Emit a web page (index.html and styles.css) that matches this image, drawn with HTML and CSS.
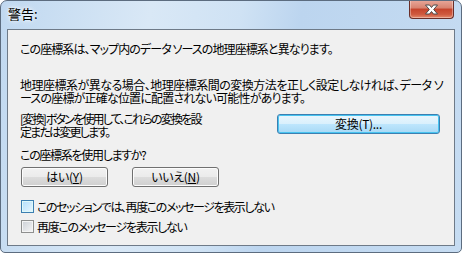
FILE: index.html
```html
<!DOCTYPE html>
<html lang="ja">
<head>
<meta charset="utf-8">
<link rel="stylesheet" href="styles.css">
</head>
<body>
<div class="window">
  <div class="titlebar">
    <span class="title">警告:</span>
    <div class="close">
      <svg width="17" height="11" viewBox="0 0 17 11">
        <path d="M2.5 1 L6.5 1 L8.5 3.5 L10.5 1 L14.5 1 L10.7 5.5 L14.5 10 L10.5 10 L8.5 7.5 L6.5 10 L2.5 10 L6.3 5.5 Z" fill="#fff" stroke="#4a4a4a" stroke-width="1" stroke-linejoin="round"/>
      </svg>
    </div>
  </div>
  <div class="client">
    <p class="line ls-09">この座標系は、マップ内のデータ&nbsp;ソースの地理座標系と異なります。</p>
    <p class="line para2"><span class="ln ls-05">地理座標系が異なる場合、地理座標系間の変換方法を正しく設定しなければ、データ&nbsp;ソ</span><span class="ln ls-08">ースの座標が正確な位置に配置されない可能性があります。</span></p>
    <div class="row">
      <p class="line ls-18"><span class="ln">[変換] ボタンを使用して、これらの変換を設</span><span class="ln">定または変更します。</span></p>
      <button class="btn default">変換(T)...</button>
    </div>
    <p class="line ask ls-13">この座標系を使用しますか?</p>
    <div class="btns">
      <button class="btn">はい(<u>Y</u>)</button>
      <button class="btn">いいえ(<u>N</u>)</button>
    </div>
    <div class="checks">
      <label class="chk ls-14"><span class="box hot"></span>このセッションでは、再度このメッセージを表示しない</label>
      <label class="chk ls-13"><span class="box"></span>再度このメッセージを表示しない</label>
    </div>
  </div>
</div>
</body>
</html>
```

FILE: styles.css
```css
* { box-sizing: border-box; }
html, body { margin: 0; padding: 0; }
body {
  width: 462px;
  height: 253px;
  background: #ffffff;
  font-family: "Noto Sans CJK JP", "Noto Sans", sans-serif;
  font-size: 12px;
  font-feature-settings: "palt";
  color: #000;
}
.window {
  width: 462px;
  height: 253px;
  border: 1px solid #5c6c7f;
  border-radius: 7px 7px 5px 5px;
  background: linear-gradient(100deg, #c0d8f0 0%, #d9e8f6 30%, #cfe2f4 48%, #bcd5ef 60%, #c6dcf2 100%);
  padding: 0 6px 6px 6px;
  display: flex;
  flex-direction: column;
  overflow: hidden;
}
.titlebar {
  height: 28px;
  display: flex;
  align-items: flex-start;
  justify-content: space-between;
}
.title {
  margin-top: 4px;
  margin-left: 1px;
  font-size: 13px;
  line-height: 18px;
  text-shadow: 0 0 6px #ffffff, 0 0 3px #ffffff;
}
.close {
  width: 45px;
  height: 19px;
  margin-top: -1px;
  margin-right: 1px;
  border: 1px solid #6a2e28;
  border-top: none;
  border-radius: 0 0 4px 4px;
  background: linear-gradient(#e9a99b 0%, #d7826f 45%, #c5432b 50%, #cf5a3f 80%, #e48a6c 100%);
  box-shadow: inset 0 0 0 1px rgba(255,255,255,0.35);
  display: flex;
  align-items: center;
  justify-content: center;
}
.client {
  flex: 1;
  background: #f0f0f0;
  border: 1px solid #6e7a88;
  padding: 12px 12px 0 12px;
}
.line {
  margin: 0;
  line-height: 13px;
  white-space: nowrap;
}
.ln { display: block; }
.ls-05 { letter-spacing: -0.5px; }
.ls-08 { letter-spacing: -0.8px; }
.ls-09 { letter-spacing: -0.9px; }
.ls-13 { letter-spacing: -1.3px; }
.ls-14 { letter-spacing: -1.4px; }
.ls-18 { letter-spacing: -1.8px; }
.para2 { margin-top: 23px; }
.row {
  margin-top: 8px;
  display: flex;
  justify-content: space-between;
  align-items: flex-start;
}
.btn {
  font-family: inherit;
  font-size: 12px;
  font-feature-settings: "palt";
  letter-spacing: -0.3px;
  color: #000;
  height: 20px;
  padding: 0;
  border: 1px solid #707070;
  border-radius: 3px;
  background: linear-gradient(#f2f2f2 0%, #ebebeb 50%, #dddddd 50%, #cfcfcf 100%);
  box-shadow: inset 0 0 0 1px #fcfcfc;
  line-height: 16px;
}
.btn u { text-decoration: underline; text-underline-offset: 1px; }
.row .btn {
  width: 163px;
  margin-top: 2px;
  margin-right: 2px;
}
.btn.default {
  border-color: #3c7fb1;
  background: linear-gradient(#eaf6fd 0%, #d9f0fc 50%, #bee6fd 50%, #a7d9f5 100%);
  box-shadow: inset 0 0 0 1px #48c4f0;
}
.ask { margin-top: 10px; }
.btns {
  margin-top: 6px;
  margin-left: 1px;
  display: flex;
  gap: 24px;
}
.btns .btn { width: 87px; }
.checks {
  margin-top: 13px;
  display: flex;
  flex-direction: column;
  gap: 7px;
}
.chk {
  display: flex;
  align-items: center;
  gap: 3px;
  line-height: 13px;
  height: 13px;
  margin-left: 1px;
}
.box {
  width: 13px;
  height: 13px;
  border: 1px solid #8e8f8f;
  background: linear-gradient(135deg, #cbcfd5, #f6f6f6);
  box-shadow: inset 0 0 0 1px #f4f4f4;
  display: inline-block;
  letter-spacing: 0;
}
.box.hot {
  border-color: #3c7fb1;
  background: linear-gradient(135deg, #b1dffd, #e9f7fe);
  box-shadow: inset 0 0 0 1px #def9fa;
}
```
